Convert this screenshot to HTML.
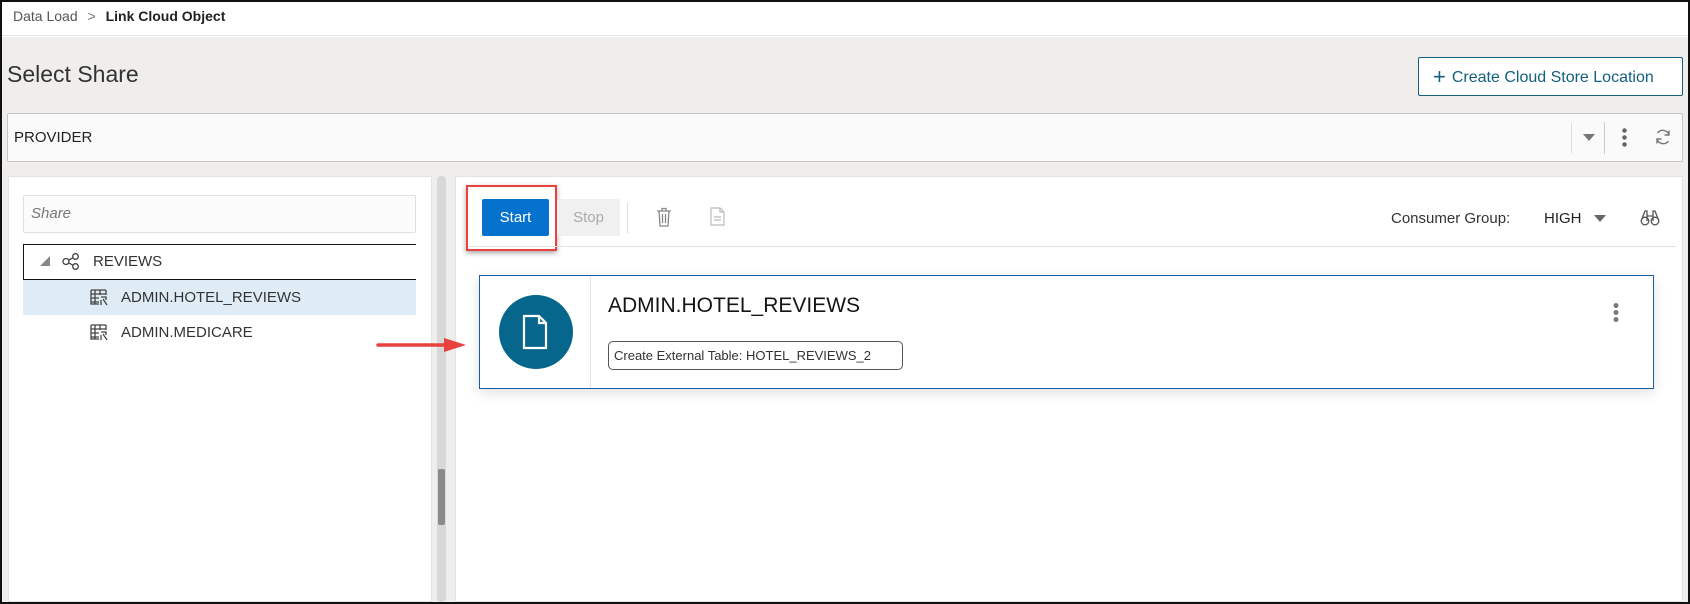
<!DOCTYPE html>
<html><head><meta charset="utf-8"><style>
*{box-sizing:border-box;margin:0;padding:0}
body{width:1690px;height:604px;overflow:hidden;font-family:"Liberation Sans",sans-serif;background:#fff;position:relative;color:#161513}
.a{position:absolute}
</style></head><body>
<div class="a" style="left:0;top:0;width:1690px;height:604px;border:2px solid #111;z-index:10;pointer-events:none"></div>
<div class="a" style="left:0;top:0;width:1690px;height:36px;background:#fff;border-bottom:1px solid #e4e3e1"></div>
<div class="a" style="left:13px;top:8px;font-size:14px;color:#555">Data Load <span style="margin:0 6px;color:#777">&gt;</span> <b style="color:#222">Link Cloud Object</b></div>
<div class="a" style="left:2px;top:37px;width:1686px;height:565px;background:#efeeec"></div>
<div class="a" style="left:7px;top:61px;font-size:23px;color:#333">Select Share</div>
<div class="a" style="left:1418px;top:57px;width:265px;height:39px;border:1px solid #14607e;background:#fff;border-radius:2px;color:#14607e;font-size:16px;line-height:37px;padding-left:14px"><span style="font-size:22px;vertical-align:-2px;margin-right:6px">+</span>Create Cloud Store Location</div>
<div class="a" style="left:7px;top:113px;width:1676px;height:49px;background:#fafafa;border:1px solid #c8c7c5;border-radius:2px"></div>
<div class="a" style="left:14px;top:129px;font-size:15px;color:#222">PROVIDER</div>
<div class="a" style="left:1571px;top:123px;width:1px;height:30px;background:#ddd"></div>
<div class="a" style="left:1583px;top:134px;border-left:6px solid transparent;border-right:6px solid transparent;border-top:7px solid #777"></div>
<div class="a" style="left:1604px;top:122px;width:1px;height:32px;background:#ccc"></div>
<div class="a" style="left:1622px;top:127px;width:5px;height:20px;background:radial-gradient(circle,#666 2px,transparent 2.5px) 0 0/5px 7px repeat-y"></div>
<svg class="a" style="left:1654px;top:128px" width="18" height="18" viewBox="0 0 18 18" fill="none" stroke="#777" stroke-width="1.4"><path d="M15 7A6.5 6.5 0 0 0 3.5 5M3 11a6.5 6.5 0 0 0 11.5 2"/><path d="M15 2.5V7h-4.5M3 15.5V11h4.5"/></svg>
<div class="a" style="left:8px;top:176px;width:424px;height:426px;background:#fff;border:1px solid #e4e3e1"></div>
<div class="a" style="left:437px;top:176px;width:9px;height:426px;background:#d8d8d8;border-radius:4px"></div>
<div class="a" style="left:438px;top:469px;width:7px;height:56px;background:#8a8a8a;border-radius:2px"></div>
<div class="a" style="left:455px;top:176px;width:1228px;height:426px;background:#fff;border:1px solid #e4e3e1"></div>
<div class="a" style="left:23px;top:195px;width:393px;height:38px;border:1px solid #e0e0e0;background:#fbfbfb;border-radius:2px;font-style:italic;color:#777;font-size:15px;line-height:36px;padding-left:7px">Share</div>
<div class="a" style="left:23px;top:244px;width:393px;height:36px;border-top:1px solid #111;border-bottom:1px solid #111;border-left:1px solid #111"></div>
<div class="a" style="left:40px;top:256px;border-left:10px solid transparent;border-bottom:10px solid #888;width:0"></div>
<svg class="a" style="left:62px;top:253px" width="18" height="17" viewBox="0 0 18 17" fill="none" stroke="#444" stroke-width="1.3"><circle cx="4" cy="8.5" r="3"/><circle cx="13.5" cy="3.5" r="2.8"/><circle cx="13.5" cy="13.5" r="2.8"/><path d="M6.7 7.2l4.3-2.5M6.7 9.8l4.3 2.5"/></svg>
<div class="a" style="left:93px;top:253px;font-size:15px;color:#333">REVIEWS</div>
<div class="a" style="left:23px;top:280px;width:393px;height:35px;background:#dfecf6"></div>
<svg class="a" style="left:90px;top:289px" width="20" height="18" viewBox="0 0 20 18" fill="none" stroke="#444" stroke-width="1.3"><path d="M1 1h15M1 1v14h8M1 5h15M1 9h8M1 13h8M5 1v14M10 1v5M16 1v5"/><path d="M11 8h5v3M13 10l4 6M11 11v5"/></svg>
<div class="a" style="left:121px;top:289px;font-size:15px;color:#333">ADMIN.HOTEL_REVIEWS</div>
<svg class="a" style="left:90px;top:324px" width="20" height="18" viewBox="0 0 20 18" fill="none" stroke="#444" stroke-width="1.3"><path d="M1 1h15M1 1v14h8M1 5h15M1 9h8M1 13h8M5 1v14M10 1v5M16 1v5"/><path d="M11 8h5v3M13 10l4 6M11 11v5"/></svg>
<div class="a" style="left:121px;top:324px;font-size:15px;color:#333">ADMIN.MEDICARE</div>
<div class="a" style="left:466px;top:185px;width:91px;height:66px;border:2px solid #e8413e;box-shadow:0 2px 5px rgba(0,0,0,.35)"></div>
<div class="a" style="left:482px;top:199px;width:67px;height:37px;background:#0572ce;border-radius:2px;color:#fff;font-size:15px;text-align:center;line-height:37px">Start</div>
<div class="a" style="left:557px;top:199px;width:63px;height:37px;background:#f0f0f0;border-radius:2px;color:#aaa;font-size:15px;text-align:center;line-height:37px">Stop</div>
<div class="a" style="left:627px;top:203px;width:1px;height:30px;background:#ddd"></div>
<svg class="a" style="left:656px;top:207px" width="16" height="20" viewBox="0 0 16 20" fill="none" stroke="#888" stroke-width="1.3"><path d="M1 4h14M6 4V1.5h4V4M3 4l1 15h8l1-15M6.5 7v9M9.5 7v9"/></svg>
<svg class="a" style="left:710px;top:207px" width="15" height="19" viewBox="0 0 15 19" fill="none" stroke="#bbb" stroke-width="1.2"><path d="M1 1h9l4 4v13H1zM10 1v4h4M4 10h7M4 13h7"/></svg>
<div class="a" style="left:468px;top:246px;width:1208px;height:1px;background:#e4e3e1"></div>
<div class="a" style="left:1391px;top:210px;font-size:15px;color:#333">Consumer Group:</div>
<div class="a" style="left:1544px;top:210px;font-size:15px;color:#222">HIGH</div>
<div class="a" style="left:1594px;top:215px;border-left:6px solid transparent;border-right:6px solid transparent;border-top:7px solid #666"></div>
<svg class="a" style="left:1640px;top:209px" width="20" height="17" viewBox="0 0 20 17" fill="none" stroke="#555" stroke-width="1.3"><circle cx="5" cy="12" r="3.8"/><circle cx="15" cy="12" r="3.8"/><path d="M1.5 11L5 2h2v10M18.5 11L15 2h-2v10M7 7h6"/></svg>
<div class="a" style="left:479px;top:275px;width:1175px;height:114px;border:1px solid #1e5ba6;background:#fff;box-shadow:0 4px 12px rgba(0,0,0,.12)"></div>
<div class="a" style="left:590px;top:276px;width:1px;height:112px;background:#e4e3e1"></div>
<div class="a" style="left:499px;top:295px;width:74px;height:74px;border-radius:50%;background:#06668b"></div>
<svg class="a" style="left:522px;top:314px" width="26" height="36" viewBox="0 0 26 36" fill="none" stroke="#fff" stroke-width="2.2"><path d="M2 2h15l7 7v25H2zM17 2v7h7"/></svg>
<div class="a" style="left:608px;top:294px;font-size:21px;color:#161513">ADMIN.HOTEL_REVIEWS</div>
<div class="a" style="left:608px;top:341px;width:295px;height:29px;border:1px solid #555;border-radius:5px;font-size:13px;line-height:27px;padding-left:5px;color:#333;white-space:nowrap">Create External Table: HOTEL_REVIEWS_2</div>
<div class="a" style="left:1613px;top:302px;width:6px;height:20px;background:radial-gradient(circle,#777 2.2px,transparent 2.7px) 0 0/6px 7px repeat-y"></div>
<svg class="a" style="left:376px;top:336px" width="92" height="18" viewBox="0 0 92 18"><path d="M2 9h70" stroke="#e8413e" stroke-width="3.5" stroke-linecap="round"/><path d="M68 2l22 7-22 7z" fill="#e8413e"/></svg>
</body></html>
